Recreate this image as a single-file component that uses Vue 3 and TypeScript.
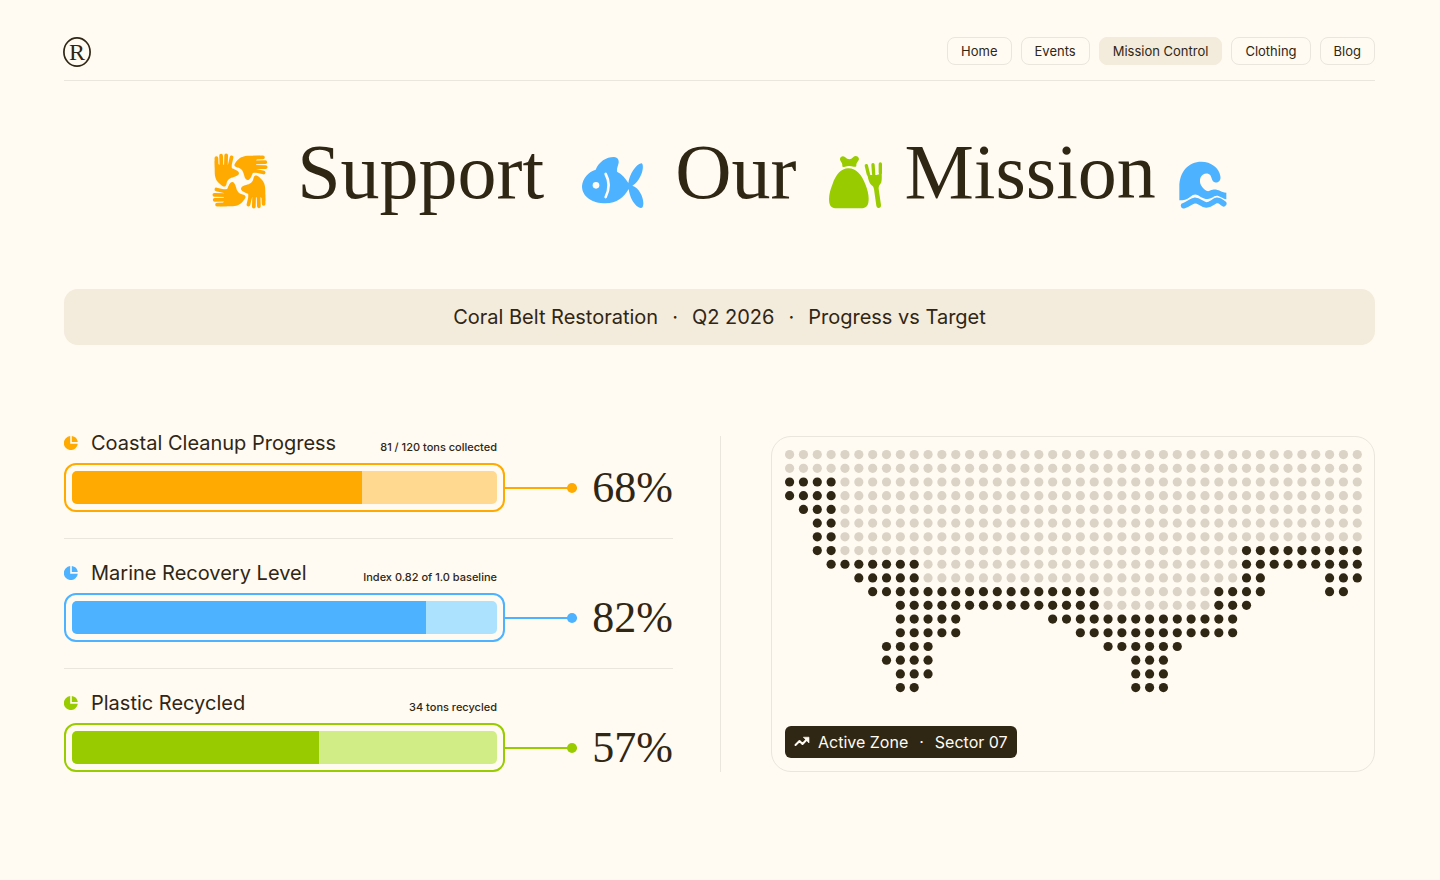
<script setup lang="ts">
interface Metric {
  id: string
  title: string
  note: string
  value: number
}

interface Dot {
  key: string
  x: number
  y: number
  dark: boolean
}

type Run = [from: number, to: number, dark: boolean]

const links: string[] = ['Home', 'Events', 'Mission Control', 'Clothing', 'Blog']
const current = 'Mission Control'

const period: string[] = ['Coral Belt Restoration', 'Q2 2026', 'Progress vs Target']

const metrics: Metric[] = [
  { id: 'cleanup', title: 'Coastal Cleanup Progress', note: '81 / 120 tons collected', value: 68 },
  { id: 'marine', title: 'Marine Recovery Level', note: 'Index 0.82 of 1.0 baseline', value: 82 },
  { id: 'plastic', title: 'Plastic Recycled', note: '34 tons recycled', value: 57 },
]

// Fill share of each bar's track, in percent
const fills: Record<string, number> = { cleanup: 68.2, marine: 83.4, plastic: 58.2 }

// Each row lists runs of columns: first, last, shoreline or water
const rows: Run[][] = [
  [[0, 41, false]],
  [[0, 41, false]],
  [[0, 3, true], [4, 41, false]],
  [[0, 3, true], [4, 41, false]],
  [[1, 3, true], [4, 41, false]],
  [[2, 3, true], [4, 41, false]],
  [[2, 3, true], [4, 41, false]],
  [[2, 3, true], [4, 32, false], [33, 41, true]],
  [[3, 9, true], [10, 32, false], [33, 41, true]],
  [[5, 9, true], [10, 32, false], [33, 34, true], [39, 41, true]],
  [[6, 22, true], [23, 30, false], [31, 34, true], [39, 40, true]],
  [[8, 22, true], [23, 30, false], [31, 33, true]],
  [[8, 12, true], [19, 32, true]],
  [[8, 12, true], [21, 32, true]],
  [[7, 10, true], [23, 28, true]],
  [[7, 10, true], [25, 27, true]],
  [[8, 10, true], [25, 27, true]],
  [[8, 9, true], [25, 27, true]],
]

const dots: Dot[] = rows.flatMap((runs, r) =>
  runs.flatMap(([from, to, dark]) =>
    Array.from({ length: to - from + 1 }, (_, i) => ({
      key: `${r}-${from + i}`,
      x: 4.6 + (from + i) * 13.87,
      y: 4.6 + r * 13.73,
      dark,
    })),
  ),
)
</script>

<template>
  <div class="page">
    <header class="top">
      <a class="logo" href="#" aria-label="Start page">
        <svg width="28" height="30" viewBox="0 0 28 30" aria-hidden="true">
          <ellipse cx="14" cy="15" rx="13.1" ry="14.1" fill="none" stroke="currentColor" stroke-width="1.7" />
          <text x="14" y="23" text-anchor="middle">R</text>
        </svg>
      </a>
      <nav class="nav" aria-label="Main">
        <a
          v-for="link in links"
          :key="link"
          href="#"
          class="nav-link"
          :class="{ active: link === current }"
          :aria-current="link === current ? 'page' : undefined"
        >{{ link }}</a>
      </nav>
    </header>

    <h1 class="hero">
      <svg class="hands" width="56" height="56" viewBox="-83 -83 166 166" aria-hidden="true">
        <g v-for="turn in 4" :key="turn" :transform="`rotate(${turn * 90})`">
          <path d="M-70-68L-69-40M-56-75L-55-40M-41-76L-42-40M-25-70L-32-40" fill="none" stroke="currentColor" stroke-width="11" stroke-linecap="round" />
          <path d="M-75-60L-75-28C-75-10-70 0-62 7C-58 11-54 14-50 16C-44 18-41 14-40 8C-38-5-29-9-18-12C-10-14-4-17-3-22C-2-29-12-33-24-38L-26-50L-36-46L-48-48L-62-48Z" fill="currentColor" />
        </g>
      </svg>
      <span>Support</span>
      <svg class="fish" width="62" height="54" viewBox="0 0 186 162" aria-hidden="true">
        <path d="M0 93C2 70 20 50 41 44C51 20 72 6 96 6C107 7 111 14 110 23C108 32 104 40 105 50C119 57 131 70 139 84C143 57 161 29 178 25C189 27 181 73 151 92C174 98 190 138 182 156C180 160 175 160 170 157C153 147 143 124 140 102C126 127 104 145 71 145C31 145 0 126 0 93Z" fill="currentColor" />
        <circle cx="42" cy="91" r="10" fill="#fffbf2" />
        <path d="M71 57C83 79 83 102 71 126" fill="none" stroke="#fffbf2" stroke-width="8" stroke-linecap="round" />
      </svg>
      <span>Our</span>
      <svg class="bag" width="54" height="54" viewBox="0 0 162 162" aria-hidden="true">
        <path d="M33 11C34 4 42 1 48 6C57 15 65 15 73 6C80 0 89 5 90 12C89 19 82 21 82 31C83 36 79 36 74 35C64 32 57 32 48 35C41 37 39 36 40 30C40 22 32 18 33 11Z" fill="currentColor" />
        <path d="M58 40C83 40 99 61 109 88C117 108 121 126 118 143C116 154 108 160 96 160H23C10 160 3 154 1 143C-2 125 3 106 11 86C21 59 36 40 58 40Z" fill="currentColor" />
        <path d="M112 32L118 57M132 29L134 57M154 27L154 53" fill="none" stroke="currentColor" stroke-width="10" stroke-linecap="round" />
        <path d="M113 49C116 62 118 82 127 90C131 93 134 95 135 103L142 152C144 162 157 161 156 150L149 101C148 93 153 90 156 84C160 76 158 61 158 48L153 55C150 60 139 62 136 57L130 59C125 62 120 59 113 49Z" fill="currentColor" />
      </svg>
      <span>Mission</span>
      <svg class="wave" width="48" height="48" viewBox="0 0 144 144" aria-hidden="true">
        <path d="M1 118V78C1 31 29 2 67 2C96 2 121 21 124 45C127 59 117 67 107 64C98 61 99 50 94 43C87 34 71 36 65 49C58 66 69 83 84 90C90 92 94 87 101 86C117 83 123 93 142 95V115C126 112 119 100 106 106C90 117 81 116 64 107C51 98 45 99 33 108C22 117 15 118 1 118Z" fill="currentColor" />
        <path d="M14 134C29 131 34 120 48 118C62 118 68 131 82 132C96 132 103 120 114 118C123 117 127 123 134 128" fill="none" stroke="currentColor" stroke-width="17" stroke-linejoin="round" stroke-linecap="round" />
      </svg>
    </h1>

    <p class="banner">
      <template v-for="(part, i) in period" :key="part">
        <span v-if="i > 0">·</span>
        <span>{{ part }}</span>
      </template>
    </p>

    <main class="board">
      <section class="metrics" aria-label="Progress">
        <article v-for="m in metrics" :key="m.id" class="metric" :class="m.id">
          <div class="metric-head">
            <svg class="pie" width="14" height="14" viewBox="0 0 14 14" aria-hidden="true">
              <path d="M6.2 .1V7.7H13.8A7 7 0 1 1 6.2 .1Z" fill="currentColor" />
              <path d="M7.8 .1A7 7 0 0 1 13.8 6.1H7.8Z" fill="currentColor" />
            </svg>
            <h2 :id="`${m.id}-title`">{{ m.title }}</h2>
            <span class="note">{{ m.note }}</span>
          </div>
          <div
            class="bar"
            role="progressbar"
            :aria-labelledby="`${m.id}-title`"
            :aria-valuenow="m.value"
            aria-valuemin="0"
            aria-valuemax="100"
          >
            <div class="track">
              <div class="fill" :style="{ width: fills[m.id] + '%' }"></div>
            </div>
          </div>
          <div class="lead"></div>
          <strong class="value">{{ m.value }}%</strong>
        </article>
      </section>

      <div class="rule"></div>

      <section class="zone" aria-label="Zone map">
        <svg class="dots" viewBox="0 0 578 243" role="img" aria-label="Dot map of the active zone">
          <circle v-for="d in dots" :key="d.key" :cx="d.x" :cy="d.y" r="4.6" :class="{ dark: d.dark }" />
        </svg>
        <div class="tag">
          <svg width="16" height="12" viewBox="0 0 16 12" aria-hidden="true">
            <path d="M1.5 9L5.5 5L8.5 8L13 3.2" fill="none" stroke="currentColor" stroke-width="2" stroke-linejoin="round" stroke-linecap="round" />
            <path d="M9.3 1.2H15V7Z" fill="currentColor" stroke="currentColor" stroke-width=".6" stroke-linejoin="round" />
          </svg>
          <span>Active Zone</span>
          <span>·</span>
          <span>Sector 07</span>
        </div>
      </section>
    </main>
  </div>
</template>

<style>
body {
  background: #fffbf2;
}
</style>

<style scoped>
.page {
  box-sizing: border-box;
  min-height: 100vh;
  padding: 36px 65px 64px 64px;
  background: #fffbf2;
  color: #302614;
  font-family: Inter, "Liberation Sans", sans-serif;
}

.top {
  display: flex;
  align-items: center;
  justify-content: space-between;
  height: 44px;
  border-bottom: 1px solid #eae6dd;
}

.logo {
  align-self: flex-start;
  height: 30px;
  margin: 1px 0 0 -1px;
  color: inherit;
}

.logo text {
  font-family: "Liberation Serif", serif;
  font-size: 24px;
  fill: currentColor;
}

.nav {
  display: flex;
  align-self: flex-start;
  gap: 9px;
  padding-top: 1px;
}

.nav-link {
  padding: 0 13px;
  border: 1px solid #eae6dd;
  border-radius: 8px;
  color: inherit;
  font-size: 13px;
  line-height: 26px;
  text-decoration: none;
}

.nav-link.active {
  border-color: #f3ebdc;
  background: #f3ebdc;
}

.hero {
  display: flex;
  align-items: flex-end;
  justify-content: center;
  gap: 23px;
  margin: 47px 0 0;
  font-family: "Liberation Serif", serif;
  font-size: 78px;
  font-weight: 400;
  line-height: 88px;
}

.hero svg {
  flex: none;
  margin-bottom: 7px;
}

.hero .hands {
  margin-right: 6px;
  color: #ffaa00;
}

.fish,
.wave {
  color: #4db2ff;
}

.hero .fish {
  margin-right: 8px;
  margin-left: 15px;
}

.hero .bag {
  margin-left: 10px;
  margin-right: -2px;
  color: #99cc00;
}

.banner {
  display: flex;
  justify-content: center;
  gap: 14px;
  margin: 73px 0 0;
  border-radius: 14px;
  background: #f3ebdc;
  font-size: 20px;
  line-height: 56px;
}

.board {
  display: grid;
  grid-template-columns: 609fr auto 604fr;
  margin-top: 86px;
}

.metrics {
  display: flex;
  flex-direction: column;
}

.metric {
  display: grid;
  grid-template-columns: minmax(0, 1fr) 72px 96px;
  row-gap: 8px;
  align-items: center;
}

.metric + .metric {
  margin-top: 26px;
  padding-top: 22px;
  border-top: 1px solid #eae6dd;
}

.cleanup {
  --tone: #ffaa00;
  --tint: #ffd98f;
}

.marine {
  --tone: #4db2ff;
  --tint: #ade2ff;
}

.plastic {
  --tone: #99cc00;
  --tint: #d1ed86;
}

.metric-head {
  display: flex;
  align-items: center;
  height: 24px;
  padding-right: 8px;
  grid-column: 1;
}

.pie {
  flex: none;
  margin-right: 13px;
  color: var(--tone);
}

.metric-head h2 {
  margin: 0;
  font-size: 20px;
  font-weight: 400;
  line-height: 24px;
}

.note {
  align-self: flex-end;
  margin-left: auto;
  font-size: 11px;
  font-weight: 500;
  line-height: 16px;
}

.bar {
  grid-column: 1;
  padding: 6px;
  border: 2px solid var(--tone);
  border-radius: 12px;
}

.track {
  height: 33px;
  overflow: hidden;
  border-radius: 5px;
  background: var(--tint);
}

.fill {
  height: 100%;
  background: var(--tone);
}

.lead {
  position: relative;
  height: 2px;
  background: var(--tone);
}

.lead::after {
  content: "";
  position: absolute;
  top: -4px;
  right: 0;
  width: 10px;
  height: 10px;
  border-radius: 50%;
  background: var(--tone);
}

.value {
  font-family: "Liberation Serif", serif;
  font-size: 44px;
  font-weight: 400;
  line-height: 48px;
  text-align: right;
}

.rule {
  width: 1px;
  margin: 5px 50px 0 47px;
  background: #eae6dd;
}

.zone {
  display: flex;
  flex-direction: column;
  align-items: flex-start;
  justify-content: space-between;
  margin-top: 5px;
  padding: 13px 12px 13px 13px;
  border: 1px solid #eae6dd;
  border-radius: 20px;
}

.dots {
  display: block;
  width: 100%;
  fill: #dad3c6;
}

.dots .dark {
  fill: #302614;
}

.tag {
  display: flex;
  align-items: center;
  gap: 11px;
  padding: 0 9px;
  border-radius: 6px;
  background: #302614;
  color: #fffbf2;
  font-size: 16px;
  line-height: 32px;
}

.tag svg {
  margin-right: -3px;
}
</style>
